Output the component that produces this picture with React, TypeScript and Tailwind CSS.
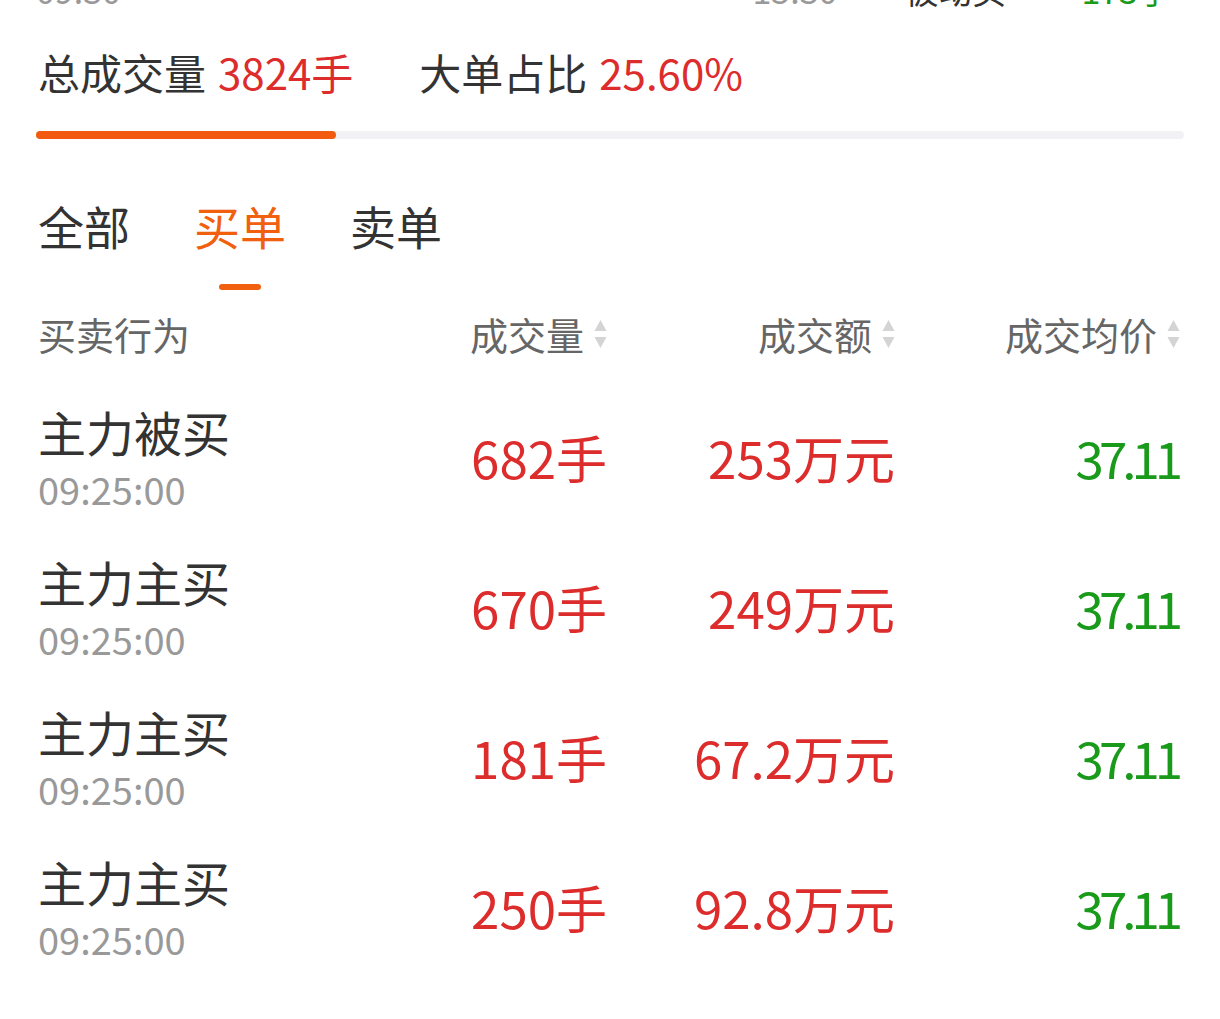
import type { ReactNode } from 'react'

const font = { fontFamily: '"Noto Sans CJK SC", "Noto Sans", sans-serif' }

const rows = [
  { act: '主力被买', time: '09:25:00', vol: '682手', amt: '253万元', price: '37.11' },
  { act: '主力主买', time: '09:25:00', vol: '670手', amt: '249万元', price: '37.11' },
  { act: '主力主买', time: '09:25:00', vol: '181手', amt: '67.2万元', price: '37.11' },
  { act: '主力主买', time: '09:25:00', vol: '250手', amt: '92.8万元', price: '37.11' },
]

function SortIcon() {
  return (
    <svg width="13" height="32" viewBox="0 0 13 32" className="ml-[10px] shrink-0">
      <path d="M6.5 2 L12.5 13 L0.5 13 Z" fill="#d4d4d4" />
      <path d="M0.5 19 L12.5 19 L6.5 30 Z" fill="#d4d4d4" />
    </svg>
  )
}

function HeadCell({ children }: { children: ReactNode }) {
  return (
    <div className="flex items-center justify-end">
      <span>{children}</span>
      <SortIcon />
    </div>
  )
}

export default function App() {
  return (
    <div className="min-h-[1019px] w-[1220px] overflow-hidden bg-white" style={font}>
      {/* clipped row from the section above */}
      <div className="mt-[-31px] flex h-[42px] items-center pl-[36px] pr-[48px] text-[34px] leading-none">
        <span className="text-[#999999]">09:30</span>
        <span className="ml-auto text-[#999999]">15:30</span>
        <span className="ml-[67px] text-[#333333]">被动买</span>
        <span className="ml-[75px] text-[#1a9a1a]">173手</span>
      </div>

      <div className="mt-[40px] flex items-center pl-[38px] text-[42px] leading-none text-[#333333]">
        <span>总成交量</span>
        <span className="ml-[12px] text-[#dd2c2c]">3824手</span>
        <span className="ml-[66px]">大单占比</span>
        <span className="ml-[12px] text-[#dd2c2c]">25.60%</span>
      </div>

      <div className="mx-[36px] mt-[38px] h-[8px] rounded-full bg-[#f2f2f4]">
        <div className="h-full w-[300px] rounded-full bg-[#f25a0f]" />
      </div>

      {/* tabs */}
      <div className="mt-[63px] flex pl-[38px] text-[46px] leading-none">
        <div className="flex flex-col items-center">
          <span className="text-[#333333]">全部</span>
        </div>
        <div className="ml-[64px] flex flex-col items-center">
          <span className="text-[#f0600f]">买单</span>
          <span className="mt-[36px] h-[6px] w-[42px] rounded-full bg-[#f0600f]" />
        </div>
        <div className="ml-[64px] flex flex-col items-center">
          <span className="text-[#333333]">卖单</span>
        </div>
      </div>

      {/* table */}
      <div className="pl-[38px] pr-[40px]">
        <div className="mt-[25px] grid grid-cols-[1fr_250px_288px_285px] items-center text-[38px] leading-none text-[#666666]">
          <div>买卖行为</div>
          <HeadCell>成交量</HeadCell>
          <HeadCell>成交额</HeadCell>
          <HeadCell>成交均价</HeadCell>
        </div>

        <div className="mt-[54px]">
          {rows.map((r, i) => (
            <div
              key={i}
              className="grid h-[150px] grid-cols-[1fr_250px_288px_285px] items-start"
            >
              <div className="flex flex-col">
                <span className="text-[48px] leading-none text-[#333333]">{r.act}</span>
                <span className="mt-[15px] text-[38px] leading-none text-[#999999]">{r.time}</span>
              </div>
              <div className="mt-[25px] text-right text-[51px] leading-none text-[#dd2c2c]">{r.vol}</div>
              <div className="mt-[25px] text-right text-[51px] leading-none text-[#dd2c2c]">{r.amt}</div>
              <div className="mt-[25px] mr-[2px] text-right text-[51px] leading-none tracking-[-5px] text-[#1a9a1a]">
                {r.price}
              </div>
            </div>
          ))}
        </div>
      </div>
    </div>
  )
}
